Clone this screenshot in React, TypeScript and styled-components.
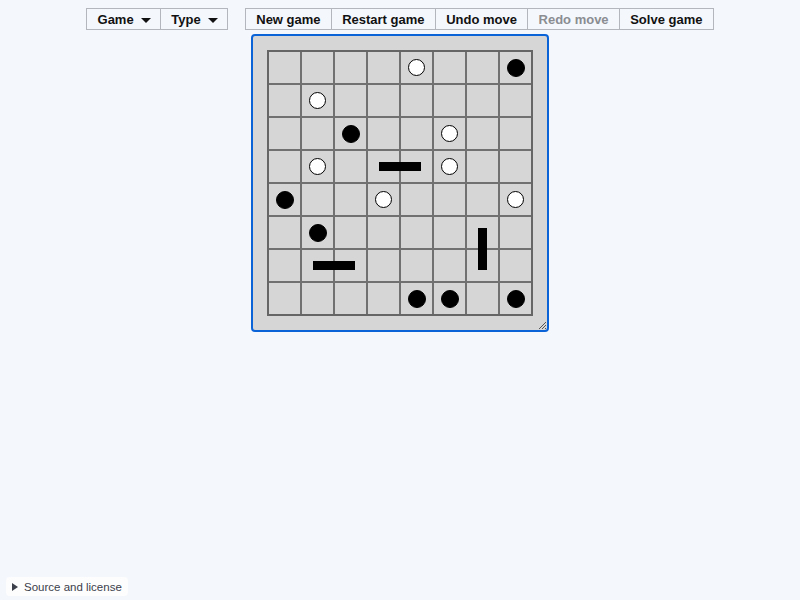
import React from "react";
import styled, { createGlobalStyle } from "styled-components";

const GlobalStyle = createGlobalStyle`
  html, body { margin: 0; padding: 0; }
  body {
    background: #f4f7fc;
    font-family: "Liberation Sans", Arial, sans-serif;
    color: #111;
  }
  #root { min-height: 100vh; display: flex; flex-direction: column; }
`;

const Page = styled.div`
  flex: 1;
  display: flex;
  flex-direction: column;
  align-items: center;
  padding-top: 8px;
`;

const Toolbar = styled.div`
  display: flex;
  gap: 17px;
`;

const Group = styled.div`
  display: flex;
`;

const Button = styled.button<{ $disabled?: boolean }>`
  height: 22px;
  box-sizing: border-box;
  margin: 0 0 0 -1px;
  padding: 0 10.3px;
  border: 1px solid #b3b7bd;
  background: #f4f7fc;
  font-family: "Liberation Sans", Arial, sans-serif;
  font-weight: bold;
  font-size: 13px;
  color: ${(p) => (p.$disabled ? "#8a8d92" : "#111")};
  display: flex;
  align-items: center;
  cursor: default;
  &:first-child { margin-left: 0; }
`;

const Arrow = styled.span`
  display: inline-block;
  width: 0;
  height: 0;
  margin-left: 7px;
  margin-right: -1px;
  border-left: 5px solid transparent;
  border-right: 5px solid transparent;
  border-top: 5px solid #111;
  transform: translateY(1px);
`;

const Frame = styled.div`
  position: relative;
  margin-top: 4px;
  box-sizing: border-box;
  width: 298px;
  height: 298px;
  padding: 14px;
  border: 2px solid #0b63d8;
  border-radius: 4px;
  background: #d6d6d6;
`;

const Board = styled.div`
  position: relative;
  display: grid;
  grid-template-columns: repeat(8, 31px);
  grid-template-rows: repeat(8, 31px);
  gap: 2px;
  border: 2px solid #666;
  background: #717171;
  width: max-content;
`;

const Cell = styled.div`
  background: #d6d6d6;
  display: flex;
  align-items: center;
  justify-content: center;
`;

const Pearl = styled.div<{ $black: boolean }>`
  box-sizing: border-box;
  width: ${(p) => (p.$black ? 18 : 17)}px;
  height: ${(p) => (p.$black ? 18 : 17)}px;
  border-radius: 50%;
  background: ${(p) => (p.$black ? "#000" : "#fff")};
  border: 1px solid #000;
`;

const Segment = styled.div`
  position: absolute;
  background: #000;
`;

const Grip = styled.svg`
  position: absolute;
  right: 0;
  bottom: 0;
`;

const Footer = styled.div`
  padding: 0 0 4px 6px;
`;

const Summary = styled.div`
  display: inline-flex;
  align-items: center;
  height: 19px;
  padding: 0 6px 0 6px;
  border-radius: 4px;
  background: #fdfdfe;
  font-size: 11.5px;
  color: #3b404a;
`;

const Tri = styled.span`
  display: inline-block;
  width: 0;
  height: 0;
  border-top: 4px solid transparent;
  border-bottom: 4px solid transparent;
  border-left: 6px solid #3b404a;
  margin-right: 6px;
`;

// 'W' white, 'B' black, '.' empty
const layout = [
  "....W..B",
  ".W......",
  "..B..W..",
  ".W...W..",
  "B..W...W",
  ".B......",
  "........",
  "....BB.B",
];

const PITCH = 33;
const lineCenter = (i: number) => 2 + i * PITCH - 1;
const cellCenter = (i: number) => 2 + i * PITCH + 15.5;

type Seg = { x: number; y: number; horiz: boolean };
const segments: Seg[] = [
  { x: lineCenter(4), y: cellCenter(3), horiz: true },
  { x: lineCenter(2), y: cellCenter(6), horiz: true },
  { x: cellCenter(6), y: lineCenter(6), horiz: false },
];

export default function App() {
  return (
    <>
      <GlobalStyle />
      <Page>
        <Toolbar>
          <Group>
            <Button>
              Game<Arrow />
            </Button>
            <Button>
              Type<Arrow />
            </Button>
          </Group>
          <Group>
            <Button>New game</Button>
            <Button>Restart game</Button>
            <Button>Undo move</Button>
            <Button $disabled>Redo move</Button>
            <Button>Solve game</Button>
          </Group>
        </Toolbar>
        <Frame>
          <Board>
            {layout.flatMap((row, r) =>
              row.split("").map((ch, c) => (
                <Cell key={`${r}-${c}`}>
                  {ch !== "." && <Pearl $black={ch === "B"} />}
                </Cell>
              ))
            )}
            {segments.map((s, i) => {
              const w = s.horiz ? 42 : 9;
              const h = s.horiz ? 9 : 42;
              return (
                <Segment
                  key={i}
                  style={{
                    left: s.x - w / 2 - 2,
                    top: s.y - h / 2 - 2,
                    width: w,
                    height: h,
                  }}
                />
              );
            })}
          </Board>
          <Grip width="10" height="10" viewBox="0 0 10 10">
            <path d="M9 2 L2 9 M9 5 L5 9 M9 8 L8 9" stroke="#555" strokeWidth="1" />
          </Grip>
        </Frame>
      </Page>
      <Footer>
        <Summary>
          <Tri />
          Source and license
        </Summary>
      </Footer>
    </>
  );
}
